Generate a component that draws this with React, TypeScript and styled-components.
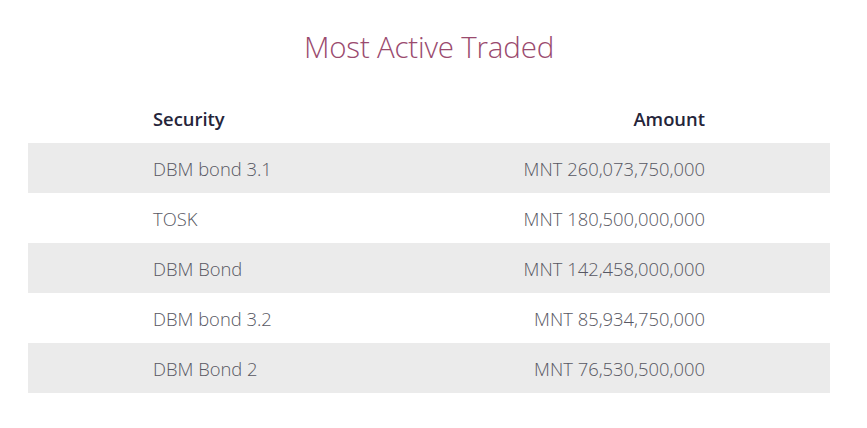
import React, { FC } from 'react'
import styled, { createGlobalStyle } from 'styled-components'

// * ------------------------------------------------------------------------------- style

const GlobalStyle = createGlobalStyle`
  html, body {
    margin: 0;
    padding: 0;
    background: #fff;
  }
  body {
    font-family: 'Open Sans', 'Noto Sans', sans-serif;
  }
`

const Wrap = styled.div`
  width: 858px;
  padding: 27px 0 0;
  box-sizing: border-box;
`

const Title = styled.h2`
  margin: 0 0 26px;
  text-align: center;
  font-size: 29.5px;
  line-height: 40px;
  font-weight: 300;
  color: #9a4a6e;
  letter-spacing: -0.2px;
`

const Table = styled.div`
  margin: 0 28px;
  display: flex;
  flex-direction: column;
`

const Row = styled.div<{ $striped?: boolean }>`
  height: 50px;
  display: grid;
  grid-template-columns: 1fr 1fr;
  align-items: center;
  padding: 0 125px;
  background: ${(p) => (p.$striped ? '#ebebeb' : 'transparent')};
`

const Cell = styled.div<{ $right?: boolean; $head?: boolean }>`
  font-size: 18.4px;
  font-weight: ${(p) => (p.$head ? 600 : 300)};
  color: ${(p) => (p.$head ? '#25253a' : '#575762')};
  text-align: ${(p) => (p.$right ? 'right' : 'left')};
  white-space: nowrap;
`

// * ------------------------------------------------------------------------------- comp

const rows = [
  { security: 'DBM bond 3.1', amount: 'MNT 260,073,750,000' },
  { security: 'TOSK', amount: 'MNT 180,500,000,000' },
  { security: 'DBM Bond', amount: 'MNT 142,458,000,000' },
  { security: 'DBM bond 3.2', amount: 'MNT 85,934,750,000' },
  { security: 'DBM Bond 2', amount: 'MNT 76,530,500,000' },
]

const App: FC = () => {
  return (
    <Wrap>
      <GlobalStyle />
      <Title>Most Active Traded</Title>
      <Table>
        <Row>
          <Cell $head>Security</Cell>
          <Cell $head $right>
            Amount
          </Cell>
        </Row>
        {rows.map((res, key: number) => (
          <Row key={key} $striped={key % 2 === 0}>
            <Cell>{res.security}</Cell>
            <Cell $right>{res.amount}</Cell>
          </Row>
        ))}
      </Table>
    </Wrap>
  )
}

export default App
